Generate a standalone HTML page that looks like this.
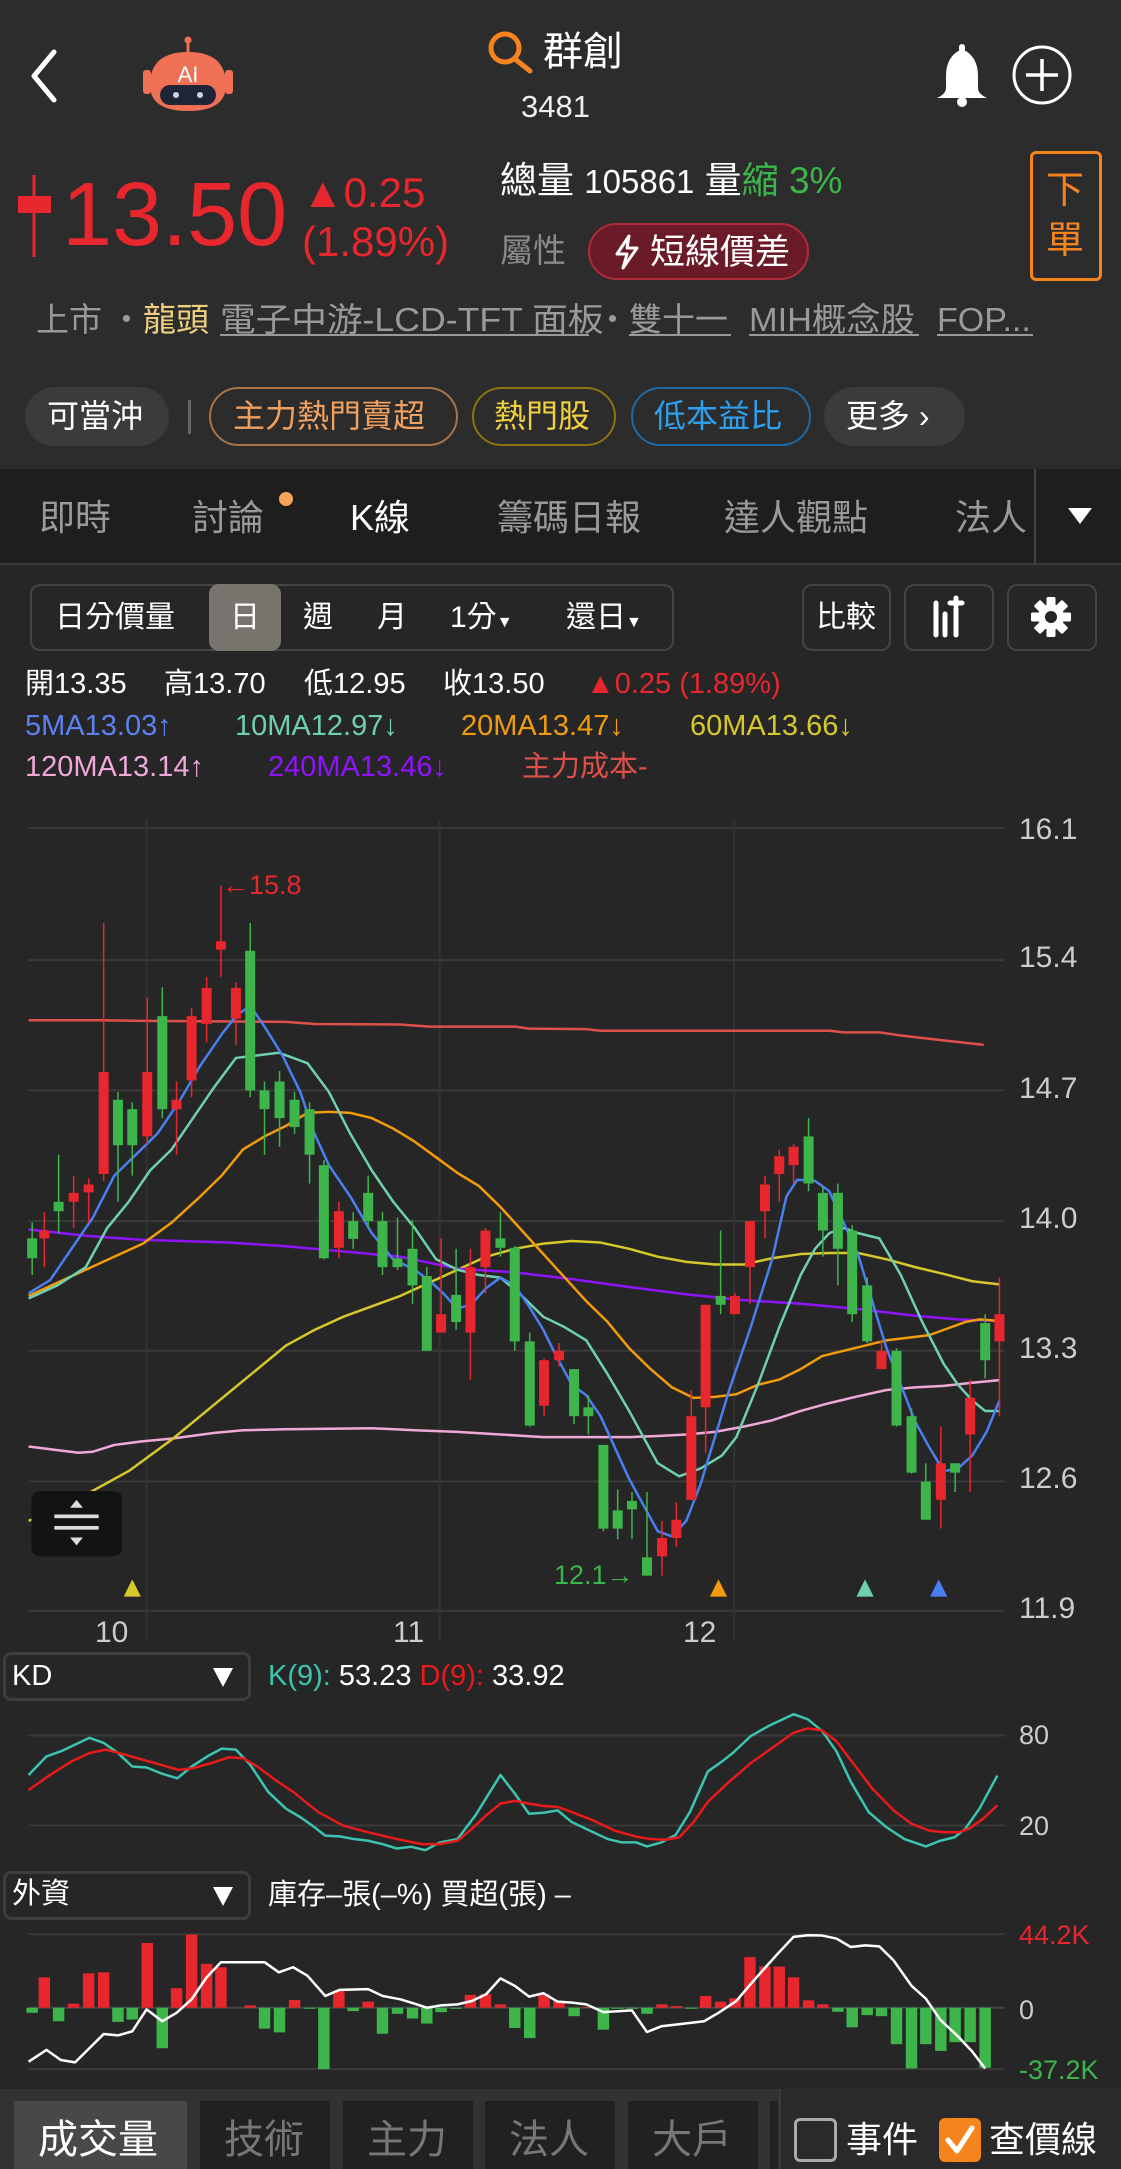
<!DOCTYPE html>
<html><head><meta charset="utf-8">
<style>
*{margin:0;padding:0;box-sizing:border-box}
body{width:1121px;height:2169px;background:#262626;position:relative;overflow:hidden;font-family:"Liberation Sans","Noto Sans CJK TC",sans-serif;color:#fff}
.a{position:absolute;white-space:nowrap}
.t{position:absolute;white-space:nowrap;line-height:1}
.tg{position:absolute;white-space:nowrap;line-height:1;font-size:33px;color:#9a9a9a;top:303px;transform-origin:left top}
.ul{position:absolute;height:2px;background:#999;top:334px}
</style></head><body>
<!-- header -->
<div class="a" style="left:0;top:0;width:1121px;height:469px;background:#2c2c2c"></div>
<svg class="a" style="left:0;top:0" width="1121" height="469">
 <path d="M54 52 L34 76 L54 100" stroke="#fff" stroke-width="5" fill="none" stroke-linecap="round" stroke-linejoin="round"/>
 <line x1="188" y1="40" x2="188" y2="52" stroke="#f07055" stroke-width="3"/>
 <circle cx="188" cy="40" r="3.5" fill="#f07055"/>
 <rect x="143" y="70" width="8" height="24" rx="3" fill="#f07055"/>
 <rect x="225" y="70" width="8" height="24" rx="3" fill="#f07055"/>
 <path d="M150 85 Q150 52 188 52 Q226 52 226 85 Q226 111 188 111 Q150 111 150 85Z" fill="#f07055"/>
 <rect x="160" y="85" width="56" height="20" rx="10" fill="#1f2437"/>
 <circle cx="176" cy="95" r="3" fill="#cfd4e6"/><circle cx="200" cy="95" r="3" fill="#cfd4e6"/>
 <text x="188" y="82" fill="#fff" font-size="22" text-anchor="middle" font-family="Liberation Sans" >AI</text>
 <circle cx="505" cy="48" r="14" stroke="#f5841f" stroke-width="5" fill="none"/>
 <line x1="515" y1="59" x2="530" y2="71" stroke="#f5841f" stroke-width="5" stroke-linecap="round"/>
 <path d="M962 49 Q946 56 946 76 L946 88 Q946 94 937 98 L987 98 Q978 94 978 88 L978 76 Q978 56 962 49Z" fill="#fff"/>
 <rect x="959" y="44" width="6" height="8" rx="3" fill="#fff"/>
 <circle cx="962" cy="102" r="5" fill="#fff"/>
 <circle cx="1042" cy="75" r="28" stroke="#fff" stroke-width="3" fill="none"/>
 <path d="M1042 59 V91 M1026 75 H1058" stroke="#fff" stroke-width="3.5"/>
 <line x1="34" y1="175" x2="34" y2="257" stroke="#e8262d" stroke-width="3"/>
 <rect x="18" y="196" width="33" height="17" fill="#e8262d"/>
</svg>
<div class="t" style="left:543px;top:32px;font-size:40px">群創</div>
<div class="t" style="left:521px;top:91px;font-size:31px;color:#eee">3481</div>
<div class="t" style="left:62px;top:170px;font-size:90px;color:#e8262d">13.50</div>
<div class="t" style="left:302px;top:172px;font-size:42px;color:#e8262d">▲0.25</div>
<div class="t" style="left:302px;top:221px;font-size:42px;color:#e8262d">(1.89%)</div>
<div class="t" style="left:500px;top:162px;font-size:37px">總量 <span style="font-size:33px">105861</span> 量<span style="color:#3db54a">縮 3%</span></div>
<div class="t" style="left:500px;top:234px;font-size:33px;color:#8a8a8a">屬性</div>
<div class="a" style="left:588px;top:223px;width:221px;height:57px;border-radius:29px;background:#6b1a28;border:2px solid #b02a3c"></div>
<svg class="a" style="left:612px;top:234px" width="30" height="36"><path d="M17 2 L5 20 H15 L11 34 L25 14 H15 Z" stroke="#fff" stroke-width="3" fill="none" stroke-linejoin="round"/></svg>
<div class="t" style="left:650px;top:235px;font-size:35px">短線價差</div>
<div class="a" style="left:1030px;top:151px;width:72px;height:130px;border:3px solid #f5841f;border-radius:6px"></div>
<div class="t" style="left:1046px;top:172px;font-size:38px;color:#f5841f">下</div>
<div class="t" style="left:1046px;top:222px;font-size:38px;color:#f5841f">單</div>
<!-- tag line -->
<div class="tg" style="left:36px">上市</div>
<div class="tg" style="left:110px">・</div>
<div class="tg" style="left:143px;color:#f0d080">龍頭</div>
<div class="tg" style="left:220px;transform:scaleX(1.08)">電子中游-LCD-TFT 面板</div>
<div class="ul" style="left:220px;width:369px"></div>
<div class="tg" style="left:596px">・</div>
<div class="tg" style="left:629px">雙十一</div>
<div class="ul" style="left:629px;width:102px"></div>
<div class="tg" style="left:749px;transform:scaleX(1.04)">MIH概念股</div>
<div class="ul" style="left:749px;width:170px"></div>
<div class="tg" style="left:937px;transform:scaleX(1.03)">FOP...</div>
<div class="ul" style="left:937px;width:96px"></div>
<!-- chips -->
<div class="a" style="left:25px;top:387px;width:144px;height:59px;border-radius:30px;background:#3b3b3b"></div>
<div class="t" style="left:47px;top:400px;font-size:32px">可當沖</div>
<div class="a" style="left:188px;top:400px;width:3px;height:34px;background:#666"></div>
<div class="a" style="left:209px;top:387px;width:249px;height:59px;border-radius:30px;border:2px solid #a87448"></div>
<div class="t" style="left:233px;top:400px;font-size:32px;color:#f0a060">主力熱門賣超</div>
<div class="a" style="left:472px;top:387px;width:144px;height:59px;border-radius:30px;border:2px solid #8a7410"></div>
<div class="t" style="left:494px;top:400px;font-size:32px;color:#f0d040">熱門股</div>
<div class="a" style="left:631px;top:387px;width:180px;height:59px;border-radius:30px;border:2px solid #1c6aa8"></div>
<div class="t" style="left:654px;top:400px;font-size:32px;color:#2ea0f0">低本益比</div>
<div class="a" style="left:824px;top:387px;width:141px;height:59px;border-radius:30px;background:#3b3b3b"></div>
<div class="t" style="left:846px;top:400px;font-size:32px">更多 ›</div>
<!-- tab bar -->
<div class="a" style="left:0;top:469px;width:1121px;height:95px;background:#1e1e1e"></div>
<div class="a" style="left:0;top:563px;width:1121px;height:2px;background:#3a3a3a"></div>
<div class="t" style="left:39px;top:500px;font-size:36px;color:#9a9a9a">即時</div>
<div class="t" style="left:192px;top:500px;font-size:36px;color:#9a9a9a">討論</div>
<div class="a" style="left:279px;top:492px;width:14px;height:14px;border-radius:7px;background:#f5a55a"></div>
<div class="t" style="left:350px;top:500px;font-size:36px;color:#fff">K線</div>
<div class="t" style="left:497px;top:500px;font-size:36px;color:#9a9a9a">籌碼日報</div>
<div class="t" style="left:724px;top:500px;font-size:36px;color:#9a9a9a">達人觀點</div>
<div class="a" style="left:955px;top:500px;width:80px;height:40px;overflow:hidden"><div class="t" style="left:0;top:0;font-size:36px;color:#9a9a9a">法人</div></div>
<div class="a" style="left:1034px;top:469px;width:2px;height:95px;background:#444"></div>
<svg class="a" style="left:1066px;top:506px" width="28" height="20"><path d="M2 2 H26 L14 18Z" fill="#fff"/></svg>
<!-- toolbar -->
<div class="a" style="left:30px;top:584px;width:644px;height:67px;border:2px solid #444;border-radius:10px"></div>
<div class="a" style="left:209px;top:584px;width:72px;height:67px;border-radius:10px;background:#77736d"></div>
<div class="t" style="left:55px;top:603px;font-size:30px">日分價量</div>
<div class="t" style="left:230px;top:603px;font-size:30px">日</div>
<div class="t" style="left:303px;top:603px;font-size:30px">週</div>
<div class="t" style="left:377px;top:603px;font-size:30px">月</div>
<div class="t" style="left:450px;top:603px;font-size:30px">1分<span style="font-size:16px">▼</span></div>
<div class="t" style="left:566px;top:603px;font-size:30px">還日<span style="font-size:16px">▼</span></div>
<div class="a" style="left:802px;top:584px;width:89px;height:67px;border:2px solid #444;border-radius:10px"></div>
<div class="t" style="left:816px;top:603px;font-size:30px">比較</div>
<div class="a" style="left:904px;top:584px;width:90px;height:67px;border:2px solid #444;border-radius:10px"></div>
<div class="a" style="left:1007px;top:584px;width:90px;height:67px;border:2px solid #444;border-radius:10px"></div>
<svg class="a" style="left:904px;top:584px" width="193" height="67">
 <path d="M32 19 V51 M41 30 V51 M52 25 V51 M52 22 V14 M46 19 H58" stroke="#fff" stroke-width="5" stroke-linecap="round"/>
 <g transform="translate(147,33)">
  <circle r="13" fill="#fff"/>
  <g fill="#fff"><rect x="-4.5" y="-20" width="9" height="40" rx="1.5"/><rect x="-4.5" y="-20" width="9" height="40" rx="1.5" transform="rotate(45)"/><rect x="-4.5" y="-20" width="9" height="40" rx="1.5" transform="rotate(90)"/><rect x="-4.5" y="-20" width="9" height="40" rx="1.5" transform="rotate(135)"/></g>
  <circle r="6" fill="#262626"/>
 </g>
</svg>
<!-- OHLC/MA text -->
<div class="t" style="left:25px;top:670px;font-size:29px">開13.35</div>
<div class="t" style="left:164px;top:670px;font-size:29px">高13.70</div>
<div class="t" style="left:304px;top:670px;font-size:29px">低12.95</div>
<div class="t" style="left:443px;top:670px;font-size:29px">收13.50</div>
<div class="t" style="left:586px;top:670px;font-size:29px;color:#e8262d">▲0.25 (1.89%)</div>
<div class="t" style="left:25px;top:712px;font-size:29px;color:#5b82f0">5MA13.03↑</div>
<div class="t" style="left:235px;top:712px;font-size:29px;color:#6fd0b0">10MA12.97↓</div>
<div class="t" style="left:461px;top:712px;font-size:29px;color:#f29b0c">20MA13.47↓</div>
<div class="t" style="left:690px;top:712px;font-size:29px;color:#d6c82a">60MA13.66↓</div>
<div class="t" style="left:25px;top:753px;font-size:29px;color:#f0a8d8">120MA13.14↑</div>
<div class="t" style="left:268px;top:753px;font-size:29px;color:#9013fe">240MA13.46↓</div>
<div class="t" style="left:522px;top:753px;font-size:29px;color:#e0504a">主力成本-</div>
<!-- main chart -->
<svg class="a" style="left:0;top:820px" width="1121" height="820" viewBox="0 0 1568 1568" preserveAspectRatio="none">
 <g stroke="#3a3a3a" stroke-width="2">
  <path vector-effect="non-scaling-stroke" d="M40 15H1405M40 268H1405M40 517H1405M40 767H1405M40 1015H1405M40 1265H1405M40 1512H1405"/>
  <path vector-effect="non-scaling-stroke" stroke="#333" d="M205 0V1568M615 0V1568M1027 0V1568"/>
 </g>
 <g fill="none" stroke-width="2.5" stroke-linejoin="round">
  <polyline vector-effect="non-scaling-stroke" stroke="#e0504a" points="40,383 140,383 200,384 400,386 440,390 560,391 600,395 720,395 740,399 820,400 840,403 1000,403 1160,403 1180,406 1230,406 1260,412 1310,420 1376,430"/>
  <polyline vector-effect="non-scaling-stroke" stroke="#f0a8d8" points="40,1198 80,1205 110,1210 130,1208 160,1195 200,1188 240,1183 300,1172 340,1167 400,1165 460,1164 520,1163 580,1167 640,1170 700,1175 760,1180 820,1180 880,1180 920,1178 960,1175 1000,1170 1040,1160 1080,1148 1120,1130 1160,1115 1200,1102 1240,1090 1280,1085 1320,1082 1360,1076 1398,1071"/>
  <polyline vector-effect="non-scaling-stroke" stroke="#d6c82a" points="40,1340 80,1320 120,1290 180,1245 240,1185 280,1140 320,1095 360,1050 400,1005 440,975 480,950 520,930 560,910 600,885 640,860 680,835 720,820 760,810 800,805 840,808 880,820 920,835 960,845 1000,850 1040,850 1080,838 1120,830 1160,828 1200,828 1240,840 1280,855 1320,868 1360,882 1398,888"/>
  <polyline vector-effect="non-scaling-stroke" stroke="#9013fe" points="40,783 120,795 200,803 320,808 400,815 480,825 560,835 640,858 720,865 800,878 880,893 960,907 1040,918 1120,925 1200,935 1280,948 1340,955 1398,958"/>
  <polyline vector-effect="non-scaling-stroke" stroke="#f29b0c" points="40,910 80,885 120,860 160,835 200,810 240,770 280,720 310,680 340,630 370,605 400,585 430,560 460,558 490,560 520,570 550,590 580,615 610,645 640,675 670,700 700,740 730,785 760,830 790,875 820,920 850,960 880,1010 910,1050 940,1085 970,1105 1000,1103 1030,1098 1060,1080 1090,1070 1120,1050 1150,1025 1180,1015 1210,1005 1240,995 1270,990 1300,985 1320,975 1350,960 1370,955 1398,958"/>
  <polyline vector-effect="non-scaling-stroke" stroke="#6fd0b0" points="40,915 80,890 120,855 150,780 180,730 210,670 240,630 270,570 300,510 330,455 360,450 390,445 430,465 460,520 490,600 520,670 550,730 580,780 610,840 640,860 670,870 700,875 730,910 760,950 790,970 820,995 850,1060 880,1130 900,1180 920,1230 950,1255 980,1240 1010,1215 1030,1180 1060,1080 1090,970 1120,870 1140,820 1160,790 1180,780 1200,790 1230,800 1260,870 1290,960 1320,1040 1340,1080 1360,1110 1378,1130 1398,1130"/>
  <polyline vector-effect="non-scaling-stroke" stroke="#4a7ff0" points="40,905 70,880 100,820 130,760 160,680 190,640 220,600 250,540 280,470 310,410 330,375 350,355 370,395 395,450 420,520 440,600 460,660 490,720 520,790 550,840 580,860 600,880 620,905 640,935 660,925 680,895 700,875 720,890 740,930 760,975 780,1030 800,1080 820,1100 840,1140 860,1200 880,1260 900,1310 920,1360 940,1370 960,1340 980,1270 1000,1180 1020,1090 1050,970 1080,840 1100,720 1115,688 1140,690 1160,710 1180,770 1200,830 1220,920 1240,1010 1260,1080 1280,1150 1300,1200 1320,1245 1340,1240 1360,1215 1380,1170 1398,1110"/>
 </g>
 <g fill="#e8262d" stroke="#e8262d" stroke-width="1.5">
  <path vector-effect="non-scaling-stroke" d="M62 750V855M103 680V780M124 685V770M145 197V690M206 340V620M247 500V640M268 360V530M289 300V425M309 125V300M330 310V430M474 730V838M617 800V980M658 820V1070M679 780V905M761 1030V1140M782 1000V1045M926 1340V1445M946 1305V1390M967 1090V1300M987 927V1210M1028 905V945M1049 767V925M1070 680V800M1090 630V730M1110 620V695M1233 995V1050M1316 1160V1355M1357 1070V1285M1398 875V1140"/>
  <g stroke="none">
  <rect x="55" y="785" width="14" height="15"/><rect x="96" y="713" width="14" height="17"/><rect x="117" y="697" width="14" height="15"/><rect x="138" y="482" width="14" height="195"/><rect x="199" y="482" width="14" height="123"/><rect x="240" y="535" width="14" height="18"/><rect x="261" y="375" width="14" height="123"/><rect x="282" y="321" width="14" height="69"/><rect x="302" y="232" width="14" height="16"/><rect x="323" y="321" width="14" height="59"/><rect x="467" y="748" width="14" height="70"/><rect x="610" y="945" width="14" height="35"/><rect x="651" y="855" width="14" height="125"/><rect x="672" y="785" width="14" height="70"/><rect x="754" y="1033" width="14" height="87"/><rect x="775" y="1015" width="14" height="18"/><rect x="919" y="1373" width="14" height="35"/><rect x="939" y="1338" width="14" height="35"/><rect x="960" y="1140" width="14" height="160"/><rect x="980" y="927" width="14" height="196"/><rect x="1021" y="910" width="14" height="35"/><rect x="1042" y="767" width="14" height="88"/><rect x="1063" y="697" width="14" height="51"/><rect x="1083" y="643" width="14" height="34"/><rect x="1103" y="625" width="14" height="35"/><rect x="1226" y="1015" width="14" height="35"/><rect x="1309" y="1230" width="14" height="70"/><rect x="1350" y="1105" width="14" height="70"/><rect x="1391" y="945" width="14" height="52"/>
  </g>
 </g>
 <g fill="#3db54a" stroke="#3db54a" stroke-width="1.5">
  <path vector-effect="non-scaling-stroke" d="M45 770V870M82 640V790M165 520V730M185 540V680M227 320V570M350 197V530M370 500V640M391 480V625M412 520V600M433 540V695M453 650V840M494 750V820M515 680V780M535 750V870M556 760V860M577 765V925M597 855V1015M638 820V975M700 750V835M720 815V1015M741 980V1160M803 1050V1155M823 1100V1175M844 1195V1360M864 1280V1375M884 1285V1375M905 1285V1445M1008 785V945M1131 570V710M1151 700V835M1172 695V890M1192 775V960M1213 875V1000M1254 1010V1160M1275 1125V1250M1295 1230V1338M1336 1230V1285M1378 945V1068"/>
  <g stroke="none">
  <rect x="38" y="800" width="14" height="38"/><rect x="75" y="730" width="14" height="18"/><rect x="158" y="535" width="14" height="87"/><rect x="178" y="553" width="14" height="69"/><rect x="220" y="375" width="14" height="178"/><rect x="343" y="250" width="14" height="267"/><rect x="363" y="517" width="14" height="36"/><rect x="384" y="500" width="14" height="70"/><rect x="405" y="535" width="14" height="52"/><rect x="426" y="553" width="14" height="87"/><rect x="446" y="660" width="14" height="178"/><rect x="487" y="767" width="14" height="34"/><rect x="508" y="713" width="14" height="54"/><rect x="528" y="767" width="14" height="88"/><rect x="549" y="838" width="14" height="17"/><rect x="570" y="820" width="14" height="70"/><rect x="590" y="872" width="14" height="143"/><rect x="631" y="908" width="14" height="52"/><rect x="693" y="800" width="14" height="18"/><rect x="713" y="818" width="14" height="179"/><rect x="734" y="997" width="14" height="161"/><rect x="796" y="1050" width="14" height="90"/><rect x="816" y="1123" width="14" height="17"/><rect x="837" y="1195" width="14" height="160"/><rect x="857" y="1320" width="14" height="35"/><rect x="877" y="1302" width="14" height="16"/><rect x="898" y="1410" width="14" height="35"/><rect x="1001" y="910" width="14" height="17"/><rect x="1124" y="605" width="14" height="90"/><rect x="1144" y="713" width="14" height="72"/><rect x="1165" y="713" width="14" height="107"/><rect x="1185" y="785" width="14" height="160"/><rect x="1206" y="890" width="14" height="107"/><rect x="1247" y="1015" width="14" height="143"/><rect x="1268" y="1140" width="14" height="108"/><rect x="1288" y="1265" width="14" height="73"/><rect x="1329" y="1230" width="14" height="18"/><rect x="1371" y="962" width="14" height="71"/>
  </g>
 </g>
 <path d="M173 1485 L185 1452 L197 1485Z" fill="#d6c82a"/>
 <path d="M993 1485 L1005 1452 L1017 1485Z" fill="#f29b0c"/>
 <path d="M1198 1485 L1210 1452 L1222 1485Z" fill="#6fd0b0"/>
 <path d="M1301 1485 L1313 1452 L1325 1485Z" fill="#4a7ff0"/>
 <rect x="44" y="1283" width="127" height="125" rx="14" fill="#131313"/>
 <g fill="#ddd"><path d="M98 1315 L107 1300 L116 1315Z"/><path d="M98 1372 L107 1387 L116 1372Z"/><rect x="76" y="1328" width="62" height="7"/><rect x="76" y="1350" width="62" height="7"/></g>
</svg>
<div class="t" style="left:1019px;top:815px;font-size:30px;color:#ccc">16.1</div>
<div class="t" style="left:1019px;top:943px;font-size:30px;color:#ccc">15.4</div>
<div class="t" style="left:1019px;top:1074px;font-size:30px;color:#ccc">14.7</div>
<div class="t" style="left:1019px;top:1204px;font-size:30px;color:#ccc">14.0</div>
<div class="t" style="left:1019px;top:1334px;font-size:30px;color:#ccc">13.3</div>
<div class="t" style="left:1019px;top:1464px;font-size:30px;color:#ccc">12.6</div>
<div class="t" style="left:1019px;top:1594px;font-size:30px;color:#ccc">11.9</div>
<div class="t" style="left:222px;top:872px;font-size:27px;color:#e8262d">←15.8</div>
<div class="t" style="left:554px;top:1562px;font-size:27px;color:#3db54a">12.1→</div>
<div class="t" style="left:95px;top:1618px;font-size:30px;color:#ccc">10</div>
<div class="t" style="left:393px;top:1618px;font-size:30px;color:#ccc">11</div>
<div class="t" style="left:683px;top:1618px;font-size:30px;color:#ccc">12</div>
<!-- KD panel -->
<div class="a" style="left:3px;top:1652px;width:248px;height:49px;border:3px solid #3d3d3d;border-radius:8px"></div>
<div class="t" style="left:12px;top:1662px;font-size:29px">KD</div>
<svg class="a" style="left:212px;top:1666px" width="22" height="22"><path d="M1 2 H21 L11 21Z" fill="#fff"/></svg>
<div class="t" style="left:268px;top:1662px;font-size:29px"><span style="color:#3cc4b0">K(9):</span> 53.23  <span style="color:#e81a1a">D(9):</span> 33.92</div>
<div class="a" style="left:3px;top:1871px;width:248px;height:49px;border:3px solid #3d3d3d;border-radius:8px"></div>
<div class="t" style="left:12px;top:1880px;font-size:29px">外資</div>
<svg class="a" style="left:212px;top:1885px" width="22" height="22"><path d="M1 2 H21 L11 21Z" fill="#fff"/></svg>
<div class="t" style="left:268px;top:1881px;font-size:29px">庫存–張(–%)  買超(張) –</div>
<svg class="a" style="left:0;top:1640px" width="1121" height="529" viewBox="0 0 1568 1568" preserveAspectRatio="none">
 <path vector-effect="non-scaling-stroke" d="M40 283H1405M40 550H1405M40 872H1405M40 1272H1405" stroke="#3a3a3a" stroke-width="2"/>
 <path vector-effect="non-scaling-stroke" d="M40 1090H1405" stroke="#444" stroke-width="2"/>
 <g fill="none" stroke-width="2.5" stroke-linejoin="round">
 <polyline vector-effect="non-scaling-stroke" stroke="#3cc4b0" points="40,400 65,345 85,330 125,290 145,305 165,335 185,375 205,378 225,395 248,410 268,375 290,345 310,322 330,325 350,370 375,450 400,500 420,525 440,555 455,580 475,582 495,590 515,595 535,605 555,618 575,613 595,623 615,600 640,590 665,520 700,400 720,455 740,515 760,512 780,505 800,540 825,565 850,590 870,600 890,600 905,612 925,600 945,578 965,510 990,390 1010,360 1025,335 1050,285 1075,255 1110,220 1130,235 1150,270 1170,330 1190,420 1215,510 1240,555 1265,590 1295,612 1315,595 1335,585 1350,560 1370,500 1395,402"/>
 <polyline vector-effect="non-scaling-stroke" stroke="#e81a1a" points="40,445 70,400 100,360 125,335 148,325 175,340 200,355 225,370 250,385 270,380 295,365 320,348 340,350 360,375 385,415 410,450 445,510 480,550 515,570 555,590 590,605 615,605 640,595 660,560 680,520 700,485 720,477 740,485 760,492 780,495 800,510 830,535 860,565 890,583 910,590 930,592 950,585 970,540 990,480 1020,420 1050,365 1080,320 1110,275 1130,262 1150,268 1170,300 1195,370 1220,440 1250,505 1275,545 1300,565 1320,570 1340,570 1355,560 1375,530 1395,490"/>
 </g>
 <g fill="#e8262d">
 <rect x="54" y="1000" width="16" height="90"/><rect x="95" y="1078" width="16" height="12"/><rect x="116" y="988" width="16" height="102"/><rect x="137" y="985" width="16" height="105"/><rect x="198" y="898" width="16" height="192"/><rect x="239" y="1032" width="16" height="58"/><rect x="260" y="873" width="16" height="217"/><rect x="281" y="960" width="16" height="130"/><rect x="301" y="970" width="16" height="120"/><rect x="342" y="1083" width="16" height="7"/><rect x="404" y="1067" width="16" height="23"/><rect x="466" y="1040" width="16" height="50"/><rect x="507" y="1072" width="16" height="18"/><rect x="650" y="1052" width="16" height="38"/><rect x="671" y="1050" width="16" height="40"/><rect x="692" y="1080" width="16" height="10"/><rect x="753" y="1050" width="16" height="40"/><rect x="774" y="1070" width="16" height="20"/><rect x="815" y="1088" width="16" height="2"/><rect x="918" y="1080" width="16" height="10"/><rect x="938" y="1085" width="16" height="5"/><rect x="979" y="1055" width="16" height="35"/><rect x="1000" y="1072" width="16" height="18"/><rect x="1020" y="1062" width="16" height="28"/><rect x="1041" y="940" width="16" height="150"/><rect x="1062" y="968" width="16" height="122"/><rect x="1082" y="968" width="16" height="122"/><rect x="1102" y="1000" width="16" height="90"/><rect x="1123" y="1068" width="16" height="22"/><rect x="1143" y="1080" width="16" height="10"/>
 </g>
 <g fill="#3db54a">
 <rect x="37" y="1090" width="16" height="15"/><rect x="74" y="1090" width="16" height="40"/><rect x="157" y="1090" width="16" height="42"/><rect x="177" y="1090" width="16" height="35"/><rect x="219" y="1090" width="16" height="120"/><rect x="362" y="1090" width="16" height="62"/><rect x="383" y="1090" width="16" height="73"/><rect x="425" y="1090" width="16" height="3"/><rect x="445" y="1090" width="16" height="182"/><rect x="486" y="1090" width="16" height="10"/><rect x="527" y="1090" width="16" height="77"/><rect x="548" y="1090" width="16" height="18"/><rect x="569" y="1090" width="16" height="32"/><rect x="589" y="1090" width="16" height="47"/><rect x="609" y="1090" width="16" height="13"/><rect x="630" y="1090" width="16" height="3"/><rect x="712" y="1090" width="16" height="60"/><rect x="733" y="1090" width="16" height="90"/><rect x="795" y="1090" width="16" height="25"/><rect x="836" y="1090" width="16" height="65"/><rect x="856" y="1090" width="16" height="3"/><rect x="876" y="1090" width="16" height="3"/><rect x="897" y="1090" width="16" height="18"/><rect x="959" y="1090" width="16" height="3"/><rect x="1164" y="1090" width="16" height="12"/><rect x="1184" y="1090" width="16" height="58"/><rect x="1205" y="1090" width="16" height="22"/><rect x="1225" y="1090" width="16" height="25"/><rect x="1246" y="1090" width="16" height="108"/><rect x="1267" y="1090" width="16" height="180"/><rect x="1287" y="1090" width="16" height="108"/><rect x="1308" y="1090" width="16" height="128"/><rect x="1328" y="1090" width="16" height="102"/><rect x="1349" y="1090" width="16" height="102"/><rect x="1370" y="1090" width="16" height="178"/>
 </g>
 <polyline vector-effect="non-scaling-stroke" fill="none" stroke="#fff" stroke-width="2.5" stroke-linejoin="round" points="40,1250 65,1215 85,1245 105,1252 125,1210 145,1168 165,1172 185,1160 205,1095 227,1130 247,1105 268,1065 289,1000 309,955 330,955 370,955 390,985 410,970 430,995 455,1055 475,1037 515,1035 535,1055 560,1065 580,1078 597,1090 617,1083 640,1080 660,1070 680,1050 700,1003 720,1025 740,1057 760,1047 780,1072 800,1075 820,1080 844,1103 884,1098 905,1162 925,1145 945,1140 985,1130 1005,1105 1030,1070 1050,1020 1075,960 1090,925 1110,880 1130,875 1150,876 1170,885 1190,910 1210,905 1230,908 1250,950 1275,1025 1295,1063 1315,1125 1340,1175 1360,1220 1378,1270"/>
</svg>
<div class="t" style="left:1019px;top:1722px;font-size:27px;color:#ccc">80</div>
<div class="t" style="left:1019px;top:1813px;font-size:27px;color:#ccc">20</div>
<div class="t" style="left:1019px;top:1922px;font-size:27px;color:#e8262d">44.2K</div>
<div class="t" style="left:1019px;top:1997px;font-size:27px;color:#ccc">0</div>
<div class="t" style="left:1019px;top:2057px;font-size:27px;color:#3db54a">-37.2K</div>
<!-- bottom tabs -->
<div class="a" style="left:0;top:2089px;width:1121px;height:80px;background:#323232"></div>
<div class="a" style="left:779px;top:2089px;width:342px;height:80px;background:#2a2a2a;border-left:2px solid #3a3a3a"></div>
<div class="a" style="left:14px;top:2101px;width:173px;height:68px;background:#484848"></div>
<div class="a" style="left:200px;top:2101px;width:130px;height:68px;background:#212121"></div>
<div class="a" style="left:343px;top:2101px;width:130px;height:68px;background:#212121"></div>
<div class="a" style="left:485px;top:2101px;width:130px;height:68px;background:#212121"></div>
<div class="a" style="left:628px;top:2101px;width:130px;height:68px;background:#212121"></div>
<div class="a" style="left:770px;top:2101px;width:8px;height:68px;background:#212121"></div>
<div class="t" style="left:38px;top:2120px;font-size:40px">成交量</div>
<div class="t" style="left:224px;top:2120px;font-size:40px;color:#777">技術</div>
<div class="t" style="left:367px;top:2120px;font-size:40px;color:#777">主力</div>
<div class="t" style="left:509px;top:2120px;font-size:40px;color:#777">法人</div>
<div class="t" style="left:652px;top:2120px;font-size:40px;color:#777">大戶</div>
<div class="a" style="left:794px;top:2118px;width:43px;height:44px;border:3px solid #aaa;border-radius:6px"></div>
<div class="t" style="left:846px;top:2122px;font-size:36px">事件</div>
<div class="a" style="left:939px;top:2118px;width:42px;height:44px;background:#f5841f;border-radius:6px"></div>
<svg class="a" style="left:939px;top:2118px" width="42" height="44"><path d="M9 22 L18 33 L33 10" stroke="#fff" stroke-width="5" fill="none" stroke-linecap="round" stroke-linejoin="round"/></svg>
<div class="t" style="left:989px;top:2122px;font-size:36px">查價線</div>
</body></html>
